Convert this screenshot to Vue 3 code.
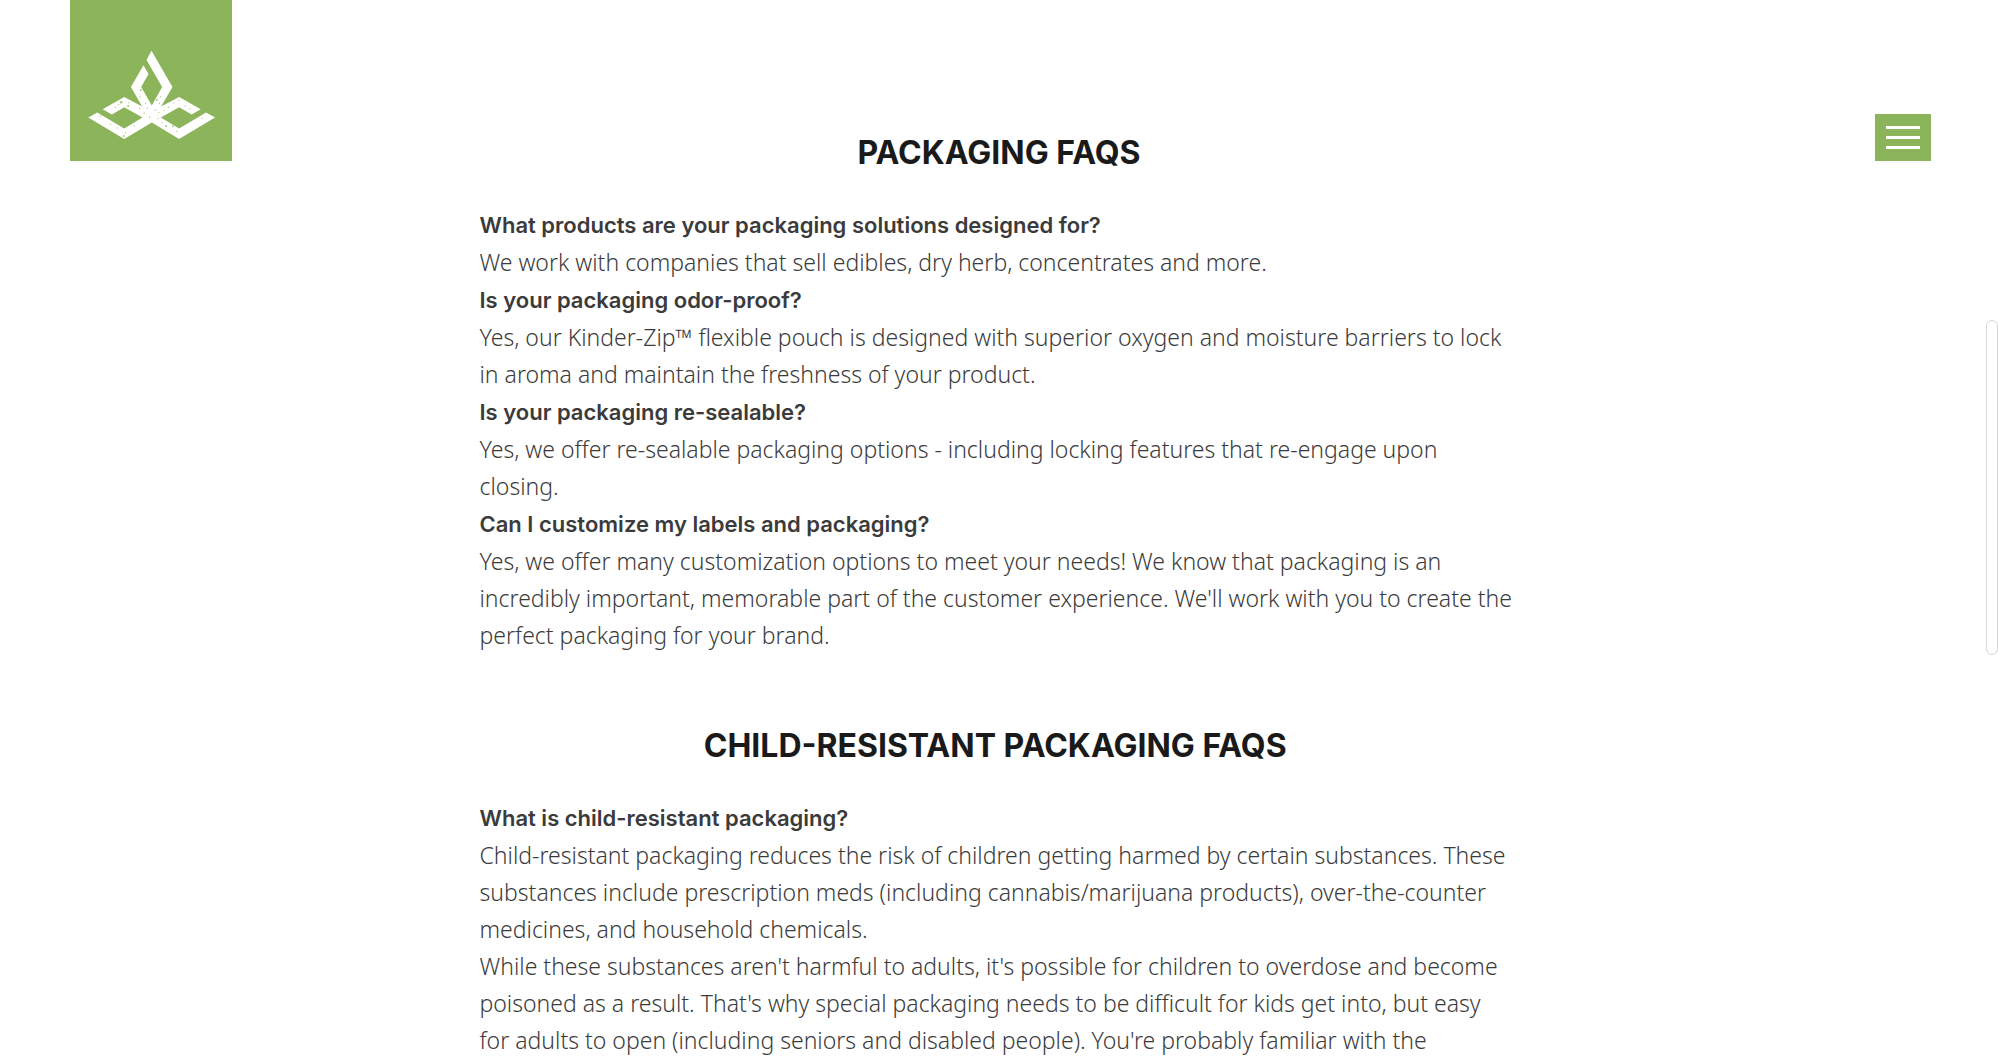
<script setup>
const sections = [
  {
    title: 'Packaging FAQs',
    items: [
      {
        question: 'What products are your packaging solutions designed for?',
        answers: ['We work with companies that sell edibles, dry herb, concentrates and more.'],
      },
      {
        question: 'Is your packaging odor-proof?',
        answers: [
          'Yes, our Kinder-Zip™ flexible pouch is designed with superior oxygen and moisture barriers to lock in aroma and maintain the freshness of your product.',
        ],
      },
      {
        question: 'Is your packaging re-sealable?',
        answers: [
          'Yes, we offer re-sealable packaging options - including locking features that re-engage upon closing.',
        ],
      },
      {
        question: 'Can I customize my labels and packaging?',
        answers: [
          "Yes, we offer many customization options to meet your needs! We know that packaging is an incredibly important, memorable part of the customer experience. We'll work with you to create the perfect packaging for your brand.",
        ],
      },
    ],
  },
  {
    title: 'Child-Resistant Packaging FAQs\u00a0',
    items: [
      {
        question: 'What is child-resistant packaging?',
        answers: [
          'Child-resistant packaging reduces the risk of children getting harmed by certain substances. These substances include prescription meds (including cannabis/marijuana products), over-the-counter medicines, and household chemicals.',
          "While these substances aren't harmful to adults, it's possible for children to overdose and become poisoned as a result. That's why special packaging needs to be difficult for kids get into, but easy for\u00a0adults to open (including seniors and disabled people). You're probably familiar with the",
        ],
      },
    ],
  },
]

// Worn-print specks on the emblem: x, y, radius
const specks = [
  [183, 307, 4], [174, 314, 2], [204, 318, 3], [166, 322, 2], [206, 309, 2], [120, 349, 2],
  [151, 374, 2], [171, 384, 2], [196, 399, 2], [191, 408, 3], [222, 378, 2], [242, 270, 3],
  [235, 220, 2], [240, 291, 2], [256, 310, 2], [238, 325, 2], [262, 325, 2], [252, 340, 2],
  [290, 300, 3], [298, 310, 2], [301, 290, 2], [285, 330, 2], [296, 338, 2], [268, 352, 2],
  [313, 332, 2], [325, 322, 2], [341, 309, 2], [356, 301, 2], [375, 318, 2], [318, 378, 3],
  [306, 368, 2], [338, 379, 3], [350, 395, 2], [293, 356, 2], [426, 356, 2], [390, 327, 2],
]
</script>

<template>
  <header class="site-header">
    <a class="logo" href="#" aria-label="Home">
      <svg viewBox="29 0 487 483" aria-hidden="true">
        <path
          fill="#fff"
          d="M274 152 337 261 303 320 357 291 422 328 395 344 357 322 302 353 357 386 438 338 465 353 357 417 275 368 192 417 84 353 111 338 192 386 247 353 192 322 155 344 127 328 192 291 246 320 212 261 250 196 265 222 243 261 275 317 306 261 259 180Z"
        />
        <circle v-for="([x, y, r], i) in specks" :key="i" :cx="x" :cy="y" :r="r" fill="#a9c884" />
      </svg>
    </a>
    <button class="menu" type="button" aria-label="Open menu">
      <span></span>
      <span></span>
      <span></span>
    </button>
  </header>

  <main class="faqs">
    <section v-for="section in sections" :key="section.title">
      <h2>{{ section.title }}</h2>
      <template v-for="item in section.items" :key="item.question">
        <h3>{{ item.question }}</h3>
        <p v-for="answer in item.answers" :key="answer">{{ answer }}</p>
      </template>
    </section>
  </main>

  <div class="scroll-thumb" aria-hidden="true"></div>
</template>

<style>
body {
  background: #fff;
}
</style>

<style scoped>
.site-header {
  position: fixed;
  top: 0;
  left: 0;
  right: 0;
  display: flex;
  justify-content: space-between;
  align-items: flex-end;
  padding: 0 67px 0 70px;
  pointer-events: none;
}

.logo,
.menu {
  background: #8cb55b;
  pointer-events: auto;
}

.logo {
  width: 162px;
  height: 161px;
}

.logo svg {
  display: block;
  width: 100%;
  height: 100%;
}

.menu {
  display: flex;
  flex-direction: column;
  align-items: center;
  justify-content: center;
  gap: 7px;
  width: 56px;
  height: 47px;
  padding: 0;
  border: 0;
  cursor: pointer;
}

.menu span {
  width: 34px;
  height: 3px;
  background: #fff;
}

.faqs {
  width: 52%;
  margin: 0 auto;
  padding-top: 129px;
  font-family: Inter, "Open Sans", sans-serif;
  color: #3b3b3b;
}

section + section {
  margin-top: 68px;
}

h2 {
  margin: 0 0 29px;
  font-size: 32px;
  font-weight: 700;
  line-height: 48px;
  text-align: center;
  text-transform: uppercase;
  color: #1a1a1a;
}

h3 {
  margin: 0;
  font-size: 22px;
  font-weight: 600;
  line-height: 38px;
}

p {
  margin: 0;
  font-family: "Noto Sans", "Open Sans", sans-serif;
  font-size: 23px;
  font-weight: 300;
  line-height: 37px;
}

.scroll-thumb {
  position: fixed;
  top: 320px;
  right: 0;
  box-sizing: border-box;
  width: 12px;
  height: 335px;
  border: 1px solid #d6d6d6;
  border-radius: 6px;
  background: #fff;
}
</style>
